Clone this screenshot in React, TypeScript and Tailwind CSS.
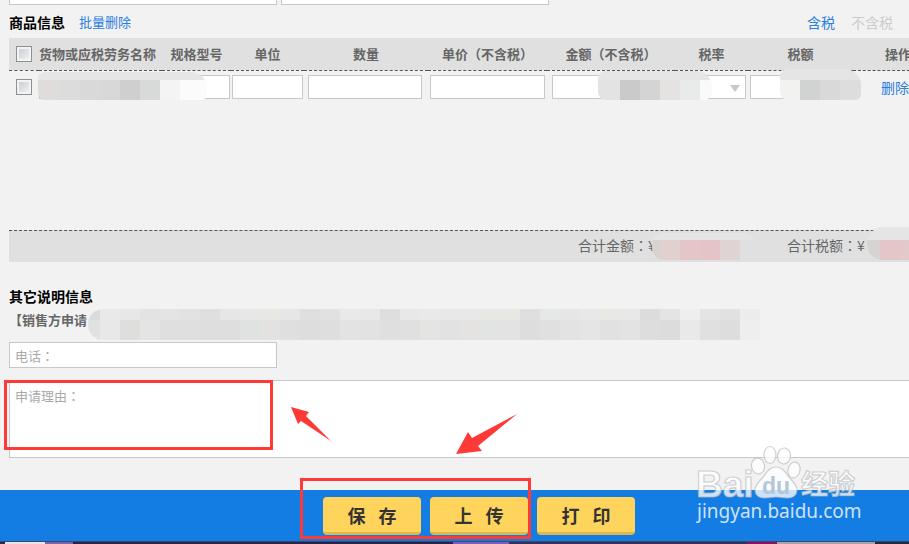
import { useState } from "react";
import clsx from "clsx";

const columns = [
  { label: "货物或应税劳务名称", width: "w-[123px]" },
  { label: "规格型号", width: "w-[69px]" },
  { label: "单位", width: "w-[73px]" },
  { label: "数量", width: "w-[124px]" },
  { label: "单价（不含税）", width: "w-[119px]" },
  { label: "金额（不含税）", width: "w-[128px]" },
  { label: "税率", width: "w-[73px]" },
  { label: "税额", width: "w-[105px]" },
  { label: "操作", width: "w-[96px]" },
];

const noteTop = [
  "bg-[#d9dbdc]", "bg-[#e9e9e9]", "bg-[#e7e7e7]", "bg-[#e3e3e3]", "bg-[#e4e4e4]",
  "bg-[#e2e2e2]", "bg-[#dfdfdf]", "bg-[#e6e6e6]", "bg-[#e6e7e6]", "bg-[#e7e7e4]",
  "bg-[#e6e6e6]", "bg-[#dfdfdf]", "bg-[#e1e1e1]", "bg-[#e9e9e9]", "bg-[#e8e8e6]",
  "bg-[#dedede]", "bg-[#e8e8e8]", "bg-[#e9e9e9]", "bg-[#e8e8e8]", "bg-[#e8e8e8]",
  "bg-[#e7e7e3]", "bg-[#e7e7e3]", "bg-[#dfdfdf]", "bg-[#e5e8e7]", "bg-[#e6e6e6]",
  "bg-[#e8e8e8]", "bg-[#e8e8e5]", "bg-[#e8e8e8]", "bg-[#dcdcdc]", "bg-[#e2e5e4]",
  "bg-[#eeeeee]", "bg-[#e4e4e4]", "bg-[#e1e1e1]", "bg-[#ececec]",
];

const noteBottom = [
  "bg-[#dfe2e1]", "bg-[#e8e8e8]", "bg-[#dededc]", "bg-[#e4e4e4]", "bg-[#dfdfdf]",
  "bg-[#dfdfdf]", "bg-[#dedede]", "bg-[#dedede]", "bg-[#dfe2e1]", "bg-[#e4e2e0]",
  "bg-[#dfdfdf]", "bg-[#dddddd]", "bg-[#dedede]", "bg-[#e3e3e3]", "bg-[#e2e2e2]",
  "bg-[#dfdfdf]", "bg-[#e0e0e0]", "bg-[#e4e4e2]", "bg-[#e2e2e2]", "bg-[#e5e3e1]",
  "bg-[#e2e4e3]", "bg-[#e3e3e3]", "bg-[#dddddd]", "bg-[#e0e0e0]", "bg-[#e3e3e3]",
  "bg-[#e5e5e5]", "bg-[#e1e1e1]", "bg-[#e3e3e3]", "bg-[#dddddd]", "bg-[#dcdcdc]",
  "bg-[#e9e9e9]", "bg-[#e0e0e0]", "bg-[#dddddd]", "bg-[#eeeeee]",
];

interface MosaicProps {
  className: string;
  tones: string[];
  topTones?: string[];
  topClass?: string;
  firstClass?: string;
}

// Censored value: a strip of 20px tiles under a thinner top strip
const Mosaic = ({
  className,
  tones,
  topTones,
  topClass,
  firstClass = "w-5",
}: MosaicProps) => (
  <div
    aria-hidden="true"
    className={clsx("absolute z-10 flex flex-col overflow-hidden", className)}
  >
    <div className={clsx("flex shrink-0", topClass)}>
      {topTones?.map((tone, i) => (
        <span key={i} className={clsx("shrink-0", i === 0 ? firstClass : "w-5", tone)} />
      ))}
    </div>
    <div className="flex h-5 shrink-0">
      {tones.map((tone, i) => (
        <span key={i} className={clsx("shrink-0", i === 0 ? firstClass : "w-5", tone)} />
      ))}
    </div>
  </div>
);

interface CheckProps {
  label: string;
  checked: boolean;
  onChange: (checked: boolean) => void;
}

const Check = ({ label, checked, onChange }: CheckProps) => (
  <input
    type="checkbox"
    aria-label={label}
    checked={checked}
    onChange={(e) => onChange(e.target.checked)}
    className="ml-[7px] block size-4 appearance-none border border-[#8e8f8f] bg-linear-to-br from-[#c4c9d2] to-[#f6f6f6] outline-2 -outline-offset-3 outline-[#f4f4f4] checked:from-[#147de3]"
  />
);

const Field = ({ label }: { label: string }) => (
  <input
    type="text"
    aria-label={label}
    className="block h-6 w-full border border-[#c8c8c8] bg-white px-1"
  />
);

const Watermark = () => (
  <svg
    aria-hidden="true"
    className="pointer-events-none absolute right-[90px] bottom-[14px] z-20 h-[86px] w-[172px]"
    viewBox="0 0 172 86"
  >
    <g
      fill="#fff"
      fillOpacity="0.78"
      stroke="#b4b8bd"
      strokeOpacity="0.65"
      strokeWidth="1.2"
    >
      <text x="0" y="53" fontFamily="Liberation Sans, sans-serif" fontWeight="700" fontSize="37">
        Bai
      </text>
      <ellipse cx="62" cy="22" rx="6.5" ry="8" transform="rotate(-10 62 22)" />
      <ellipse cx="74" cy="11" rx="6" ry="8.5" />
      <ellipse cx="88" cy="12" rx="6.5" ry="8" transform="rotate(8 88 12)" />
      <ellipse cx="98" cy="26" rx="6" ry="8" transform="rotate(12 98 26)" />
      <path d="M80 23c6 0 9 4 12 9 4 5 9 8 9 14 0 5-4 8-9 8-4 0-7-1-12-1s-8 1-12 1c-5 0-9-3-9-8 0-6 5-9 9-14 3-5 6-9 12-9z" />
      <text
        x="105"
        y="50"
        fontFamily="Noto Sans CJK SC, sans-serif"
        fontWeight="700"
        fontSize="27"
      >
        经验
      </text>
    </g>
    <text
      x="66"
      y="50"
      fill="#b3c6da"
      fontFamily="Liberation Sans, sans-serif"
      fontWeight="700"
      fontSize="23"
    >
      du
    </text>
    <text
      x="1"
      y="74"
      fill="#fff"
      fillOpacity="0.8"
      fontFamily="Noto Sans, sans-serif"
      fontSize="19"
    >
      jingyan.baidu.com
    </text>
  </svg>
);

const Arrows = () => (
  <svg
    aria-hidden="true"
    className="pointer-events-none absolute top-[26px] left-[281px] h-[50px] w-[230px] fill-[#fd3a37]"
    viewBox="0 0 230 50"
  >
    <path d="M1 1l18 5-3 4 25 25-30-20-3 3z" />
    <path d="M166 48l12-22 4 6 45-24-39 32 4 5z" />
  </svg>
);

const actions = ["保\u2002\u00a0存", "上\u2002\u00a0传", "打\u2002\u00a0印"];

const App = () => {
  const [allChecked, setAllChecked] = useState(false);
  const [rowChecked, setRowChecked] = useState(false);
  const [phone, setPhone] = useState("");
  const [reason, setReason] = useState("");

  const handleCheckAll = (checked: boolean) => {
    setAllChecked(checked);
    setRowChecked(checked);
  };

  return (
    <div className="overflow-hidden bg-[#f2f2f2] font-['Noto_Sans_CJK_SC',sans-serif] text-[13px] leading-5 text-[#666]">
      <div className="relative min-w-[958px]">
        <main className="px-[9px] pb-8">
          <div className="flex gap-1">
            <input
              type="text"
              aria-label="购买方信息"
              className="h-[5px] w-[268px] border border-t-0 border-[#c8c8c8] bg-white"
            />
            <input
              type="text"
              aria-label="销售方信息"
              className="h-[5px] w-[268px] border border-t-0 border-[#c8c8c8] bg-white"
            />
          </div>

          <div className="flex h-[33px] items-center gap-[14px] pt-px">
            <h2 className="text-sm font-bold text-black">商品信息</h2>
            <a href="#" className="text-[#2a7de1]">
              批量删除
            </a>
            <div className="ml-auto flex gap-4 pr-14 text-sm">
              <a href="#" className="text-[#2a7de1]">
                含税
              </a>
              <a href="#" className="text-[#ccc]">
                不含税
              </a>
            </div>
          </div>

          <div className="h-48">
            <table className="w-full table-fixed border-collapse">
              <thead className="bg-[#e0e0e0]">
                <tr className="h-8 border-b border-dashed border-[#555]">
                  <th className="w-[30px] p-0">
                    <Check label="全选" checked={allChecked} onChange={handleCheckAll} />
                  </th>
                  {columns.map((col, i) => (
                    <th
                      key={col.label}
                      className={clsx(
                        "p-0 font-bold whitespace-nowrap",
                        i === 0 ? "text-left" : "text-center",
                        i === columns.length - 1 && "pr-1.5",
                        col.width
                      )}
                    >
                      {col.label}
                    </th>
                  ))}
                </tr>
              </thead>
              <tbody>
                <tr className="h-[33px]">
                  <td className="p-0">
                    <Check label="选择此行" checked={rowChecked} onChange={setRowChecked} />
                  </td>
                  <td className="relative p-0 pr-px">
                    <Field label="货物或应税劳务名称" />
                    <Mosaic
                      className="top-px -left-px w-[169px] rounded-l-lg rounded-tr-2xl rounded-br-md"
                      topClass="h-2 bg-[#e6e6e6]"
                      firstClass="w-[22px]"
                      tones={[
                        "bg-[#dfdcdb]", "bg-[#dcdcdc]", "bg-[#d9d9d9]", "bg-[#d8d8d8]",
                        "bg-[#cfcfcf]", "bg-[#d7dad9]", "bg-[#f4f4f4]", "bg-[#fbfbfb]",
                        "bg-[#fbfbfb]",
                      ]}
                    />
                  </td>
                  <td className="p-0 pr-px pl-0.5">
                    <Field label="规格型号" />
                  </td>
                  <td className="p-0 px-px">
                    <Field label="单位" />
                  </td>
                  <td className="p-0 pr-1.5 pl-1">
                    <Field label="数量" />
                  </td>
                  <td className="p-0 pr-0.5 pl-0.5">
                    <Field label="单价（不含税）" />
                  </td>
                  <td className="relative p-0 pr-3 pl-[5px]">
                    <Field label="金额（不含税）" />
                    <Mosaic
                      className="top-0 left-[51px] w-[114px] rounded-l-lg rounded-tr-2xl rounded-br-lg"
                      topClass="h-[9px] bg-[#e6e6e6]"
                      firstClass="w-[22px]"
                      tones={[
                        "bg-[#e3e3e3]", "bg-[#cacaca]", "bg-[#d4d4d4]", "bg-[#e5e3e2]",
                        "bg-[#e8ebea]", "bg-[#fafafa]",
                      ]}
                    />
                  </td>
                  <td className="relative p-0 pr-0.5">
                    <select
                      aria-label="税率"
                      className="block h-6 w-full appearance-none border border-[#c8c8c8] bg-white"
                    />
                    <svg
                      aria-hidden="true"
                      viewBox="0 0 10 7"
                      className="pointer-events-none absolute top-[14px] right-2 h-[7px] w-[10px] fill-[#c8c8c8]"
                    >
                      <path d="M0 0h10L5 7z" />
                    </svg>
                  </td>
                  <td className="relative p-0 pr-1 pl-0.5">
                    <Field label="税额" />
                    <Mosaic
                      className="-top-0.5 left-8 w-[81px] rounded-l-lg rounded-tr-2xl rounded-br-md"
                      topClass="h-[11px] bg-[#e5e5e5]"
                      tones={[
                        "bg-[#f2f2f0]", "bg-[#d0d3d2]", "bg-[#d8d9d8]", "bg-[#dddddd]",
                        "bg-[#dddddd]",
                      ]}
                    />
                  </td>
                  <td className="p-0 pr-3 text-center text-sm">
                    <a href="#" className="text-[#2a7de1]">
                      删除
                    </a>
                  </td>
                </tr>
              </tbody>
            </table>
          </div>

          <div className="flex h-8 items-center justify-end border-t border-dashed border-[#555] bg-[#e0e0e0] pb-1 font-['Noto_Sans_CJK_TC',sans-serif] text-sm">
            <div className="relative w-[209px]">
              合计金额：¥
              <Mosaic
                className="-top-0.5 left-[74px] w-[103px] rounded-l-xl rounded-tr-xl"
                topClass="h-[7px] bg-[#e5e5e5]"
                firstClass="w-2"
                tones={[
                  "bg-[#d6d3d2]", "bg-[#e0d0ce]", "bg-[#e4c6c6]", "bg-[#e4c4c4]",
                  "bg-[#dfd3d3]", "bg-[#e0e0e0]",
                ]}
              />
            </div>
            <div className="relative w-[162px]">
              合计税额：¥
              <Mosaic
                className="-top-2 left-20 w-[82px] rounded-l-2xl"
                topClass="h-[13px] bg-[#e5e5e5]"
                firstClass="w-[13px]"
                tones={[
                  "bg-[#d6d3d2]", "bg-[#e4c6c6]", "bg-[#e3c9c9]", "bg-[#e2cccc]",
                  "bg-[#e0d6d6]",
                ]}
              />
            </div>
          </div>

          <h2 className="mt-[22px] text-sm leading-6 font-bold text-black">其它说明信息</h2>
          <div className="relative h-[34px] leading-6 font-bold">
            【销售方申请
            <Mosaic
              className="top-px left-[79px] w-[672px] rounded-l-2xl"
              topClass="h-[11px]"
              firstClass="w-3"
              topTones={noteTop}
              tones={noteBottom}
            />
          </div>

          <input
            type="text"
            aria-label="电话"
            placeholder="电话："
            value={phone}
            onChange={(e) => setPhone(e.target.value)}
            className="block h-[26px] w-[268px] border border-[#c8c8c8] bg-white px-[5px] font-['Noto_Sans_CJK_TC',sans-serif] placeholder:text-[#aaa]"
          />

          <div className="relative mt-3">
            <textarea
              aria-label="申请理由"
              placeholder="申请理由："
              value={reason}
              onChange={(e) => setReason(e.target.value)}
              className="block h-[78px] w-full resize-none border border-[#c8c8c8] bg-white px-[5px] py-[5px] font-['Noto_Sans_CJK_TC',sans-serif] placeholder:text-[#aaa]"
            />
            <div className="pointer-events-none absolute top-0 -left-[5px] h-[70px] w-[269px] border-3 border-[#fd3a37]" />
            <Arrows />
          </div>
        </main>

        <footer className="flex h-[51px] justify-center bg-[#147de3] pt-[7px]">
          <div className="relative flex gap-[9px]">
            {actions.map((label) => (
              <button
                key={label}
                type="button"
                className="h-[38px] w-[98px] rounded-sm border-b-3 border-[#dfb74f] bg-[#ffd45c] text-lg font-bold text-[#333]"
              >
                {label}
              </button>
            ))}
            <div className="pointer-events-none absolute -top-[19px] -left-[23px] h-[61px] w-[231px] border-3 border-[#fd3a37]" />
          </div>
        </footer>

        {/* Sliver of the desktop below the page */}
        <div className="flex h-[3px] border-t border-[#3b4a66] bg-[#2a2850]">
          <span className="w-[5px]" />
          <span className="w-10 bg-[#e8e4e8]" />
          <span className="w-7 bg-[#7a63a8]" />
          <span className="w-[380px] bg-[#2a2348]" />
          <span className="w-14 bg-[#7d5cc0]" />
          <span className="w-[238px] bg-[#33305c]" />
          <span className="w-[30px] bg-[#8a1260]" />
          <span className="w-[98px] bg-[#a9a2ab]" />
          <span className="grow bg-[#1f2a40]" />
        </div>
        <Watermark />
      </div>
    </div>
  );
};

export default App;
